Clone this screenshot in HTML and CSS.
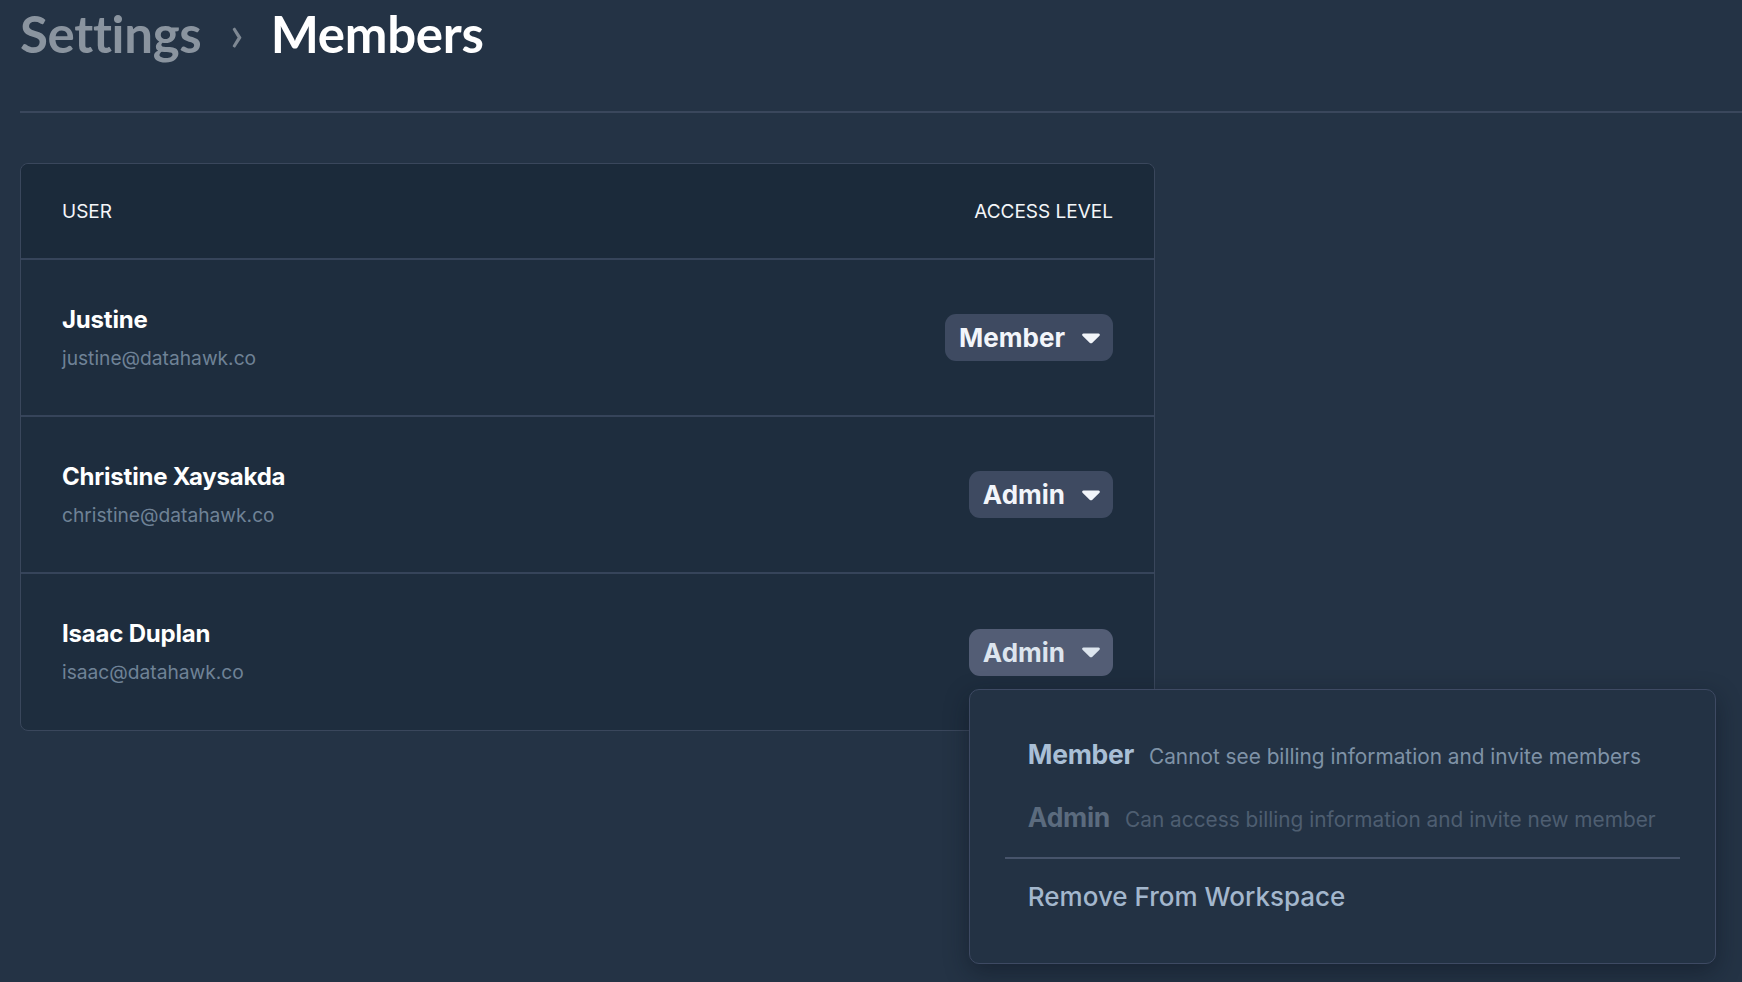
FILE: index.html
```html
<!DOCTYPE html>
<html>
<head>
  <title>Members</title>
  <link rel="stylesheet" href="styles.css">
</head>
<body>

  <header class="page-header">
    <h1 class="breadcrumb">
      <span class="crumb-parent">Settings</span>
      <span class="crumb-sep">&rsaquo;</span>
      <span class="crumb-current">Members</span>
    </h1>
  </header>

  <div class="members-table">
    <div class="table-head">
      <span>USER</span>
      <span>ACCESS LEVEL</span>
    </div>

    <div class="member-row">
      <div class="member-info">
        <div class="member-name">Justine</div>
        <div class="member-email">justine@datahawk.co</div>
      </div>
      <div class="access-cell">
        <button class="access-btn">Member
          <svg class="caret" width="20" height="12" viewBox="0 0 20 12"><path d="M2.5 1.5h15c1.2 0 1.8 1.3 1 2.2l-7.4 7.2c-.6.6-1.6.6-2.2 0L1.5 3.7c-.8-.9-.2-2.2 1-2.2z" fill="currentColor"/></svg>
        </button>
      </div>
    </div>

    <div class="member-row">
      <div class="member-info">
        <div class="member-name">Christine Xaysakda</div>
        <div class="member-email">christine@datahawk.co</div>
      </div>
      <div class="access-cell">
        <button class="access-btn">Admin
          <svg class="caret" width="20" height="12" viewBox="0 0 20 12"><path d="M2.5 1.5h15c1.2 0 1.8 1.3 1 2.2l-7.4 7.2c-.6.6-1.6.6-2.2 0L1.5 3.7c-.8-.9-.2-2.2 1-2.2z" fill="currentColor"/></svg>
        </button>
      </div>
    </div>

    <div class="member-row">
      <div class="member-info">
        <div class="member-name">Isaac Duplan</div>
        <div class="member-email">isaac@datahawk.co</div>
      </div>
      <div class="access-cell">
        <button class="access-btn open">Admin
          <svg class="caret" width="20" height="12" viewBox="0 0 20 12"><path d="M2.5 1.5h15c1.2 0 1.8 1.3 1 2.2l-7.4 7.2c-.6.6-1.6.6-2.2 0L1.5 3.7c-.8-.9-.2-2.2 1-2.2z" fill="currentColor"/></svg>
        </button>

        <!-- dropdown for the open button -->
        <div class="access-menu">
          <div class="menu-option">
            <strong>Member</strong>
            <span>Cannot see billing information and invite members</span>
          </div>
          <div class="menu-option dim">
            <strong>Admin</strong>
            <span>Can access billing information and invite new member</span>
          </div>
          <hr class="menu-divider">
          <div class="menu-remove">Remove From Workspace</div>
        </div>
      </div>
    </div>
  </div>

</body>
</html>
```

FILE: styles.css
```css
body {
  margin: 0;
  padding: 0 0 0 20px;
  background: #243345;
  font-family: Inter, 'Noto Sans', sans-serif;
  color: #fff;
  min-height: 100vh;
  box-sizing: border-box;
}

.page-header {
  height: 111px;
  border-bottom: 2px solid #3a475c;
}

.breadcrumb {
  margin: 0;
  padding-top: 1px;
  font-family: Lato, sans-serif;
  font-size: 51px;
  font-weight: 700;
  line-height: 66px;
  letter-spacing: -0.3px;
}

.crumb-parent {
  color: #8a949f;
}

.crumb-sep {
  color: #7e8893;
  font-weight: 400;
  margin: 0 15px 0 16px;
  position: relative;
  top: -2px;
}

.crumb-current {
  color: #fff;
}

.members-table {
  width: 1133px;
  margin-top: 50px;
  border: 1px solid #3a475c;
  border-radius: 8px;
  background: #1e2d3e;
}

.table-head {
  display: flex;
  justify-content: space-between;
  align-items: center;
  height: 94px;
  padding: 0 41px;
  background: #1b2a3a;
  border-bottom: 2px solid #36445a;
  border-radius: 8px 8px 0 0;
  font-size: 19px;
  color: #f4f6f9;
}

.member-row {
  display: flex;
  justify-content: space-between;
  align-items: center;
  height: 155px;
  padding: 0 41px;
  border-bottom: 2px solid #36445a;
}

.member-row:last-child {
  border-bottom: none;
  height: 156px;
}

.member-name {
  font-size: 24px;
  font-weight: 700;
  line-height: 30px;
  color: #fff;
  letter-spacing: -0.2px;
}

.member-email {
  margin-top: 10px;
  font-size: 19.2px;
  line-height: 26px;
  color: #6f8296;
}

.access-cell {
  position: relative;
}

.access-btn {
  display: flex;
  align-items: center;
  gap: 16px;
  height: 47px;
  padding: 0 12px 0 14px;
  border: none;
  border-radius: 11px;
  background: #3e4a61;
  color: #f2f5fa;
  font-family: Inter, 'Noto Sans', sans-serif;
  font-size: 26px;
  font-weight: 700;
  cursor: pointer;
}

.access-btn.open {
  background: #535d75;
  color: #dde5ee;
}

.caret {
  display: block;
}

.access-menu {
  position: absolute;
  left: 0;
  top: 60px;
  width: 747px;
  box-sizing: border-box;
  padding: 34px 35px 28px;
  background: #233244;
  border: 1px solid #3e4a63;
  border-radius: 10px;
  box-shadow: 0 8px 24px rgba(10, 18, 28, 0.45);
  z-index: 2;
}

.menu-option {
  display: flex;
  align-items: baseline;
  gap: 15px;
  padding: 15px 23px;
  line-height: 31px;
  white-space: nowrap;
}

.menu-option strong {
  font-size: 26.5px;
  font-weight: 700;
  color: #a9bfd6;
  letter-spacing: -0.3px;
}

.menu-option span {
  font-size: 20.8px;
  color: #7f92a7;
}

.menu-option.dim strong {
  color: #5b6b7e;
}

.menu-option.dim span {
  color: #4e5e71;
}

.menu-divider {
  margin: 7px 0 0;
  border: none;
  border-top: 2px solid #47546b;
}

.menu-remove {
  padding: 22px 23px 22px;
  line-height: 32px;
  font-size: 26px;
  font-weight: 500;
  color: #a3b7cd;
}
```
